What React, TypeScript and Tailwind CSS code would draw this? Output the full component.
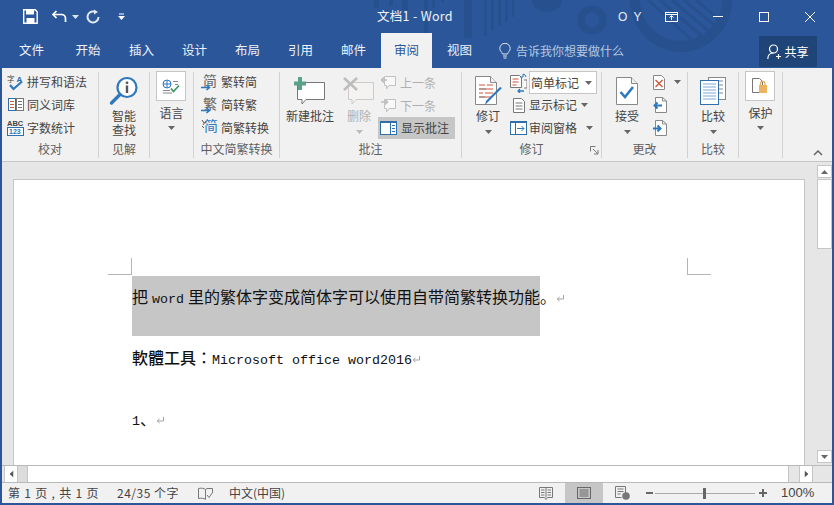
import React from "react";

const Caret = ({ c = "#666" }: { c?: string }) => (
  <svg width="7" height="4" viewBox="0 0 7 4" className="shrink-0"><path d="M0 0h7L3.5 4z" fill={c} /></svg>
);

const Pilcrow = () => (
  <svg width="9" height="9" viewBox="0 0 9 9" className="shrink-0"><path d="M7.5 1v4H1.5M3.5 3 1.2 5l2.3 2" fill="none" stroke="#9a9a9a" strokeWidth="0.9" /></svg>
);

const TitlePattern = () => (
  <svg width="834" height="68" viewBox="0 0 834 68" className="absolute left-0 top-0 pointer-events-none">
    <g fill="#27508f">
      <rect x="374" y="0" width="5" height="8" />
      <rect x="389" y="0" width="4" height="6" />
      <rect x="402" y="0" width="6" height="10" />
      <rect x="424" y="0" width="4" height="34" />
      <rect x="432" y="0" width="3" height="8" />
      <rect x="441" y="0" width="3" height="2" />
      <rect x="464" y="0" width="8" height="38" />
      <rect x="484" y="0" width="3" height="36" />
      <rect x="491" y="0" width="3" height="30" />
      <rect x="498" y="0" width="3" height="26" />
      <rect x="505" y="0" width="3" height="22" />
      <rect x="512" y="0" width="2" height="17" />
      <path d="M532 0h30a15 12 0 0 1-30 0z" />
    </g>
    <circle cx="592" cy="20" r="11" fill="none" stroke="#27508f" strokeWidth="7" />
    <path d="M630 0a51 52 0 0 0 102 0h-10a41 41 0 0 1-82 0z" fill="#27508f" />
    <g stroke="#27508f" strokeWidth="3">
      <path d="M648 0 694 42M660 0 704 38M672 0 712 34M684 0 718 28M696 0 722 22" />
    </g>
  </svg>
);

const Tab = ({ w, label, active }: { w: string; label: string; active?: boolean }) => (
  <div className={`${w} h-full flex items-center justify-center text-[12.5px] ${active ? "bg-[#f1f1f1] text-[#2b579a]" : "text-[#eef2f8]"}`}>{label}</div>
);

const Group = ({ w, label, children, launcher }: { w: string; label: string; children: React.ReactNode; launcher?: boolean }) => (
  <div className={`${w} relative h-[86px] my-[4px] shrink-0 flex flex-col border-r border-[#d2d2d2]`}>
    <div className="flex h-[68px] -mt-[1px]">{children}</div>
    <div className="h-[19px] flex items-center justify-center text-[12px] text-[#5f5f5f]">{label}</div>
    {launcher && (
      <svg width="9" height="9" viewBox="0 0 9 9" className="absolute right-[2px] bottom-[3px]">
        <path d="M0.5 0.5h5M0.5 0.5v5" stroke="#777" fill="none" />
        <path d="M3 3 7.5 7.5M8 4v4H4" stroke="#777" fill="none" />
      </svg>
    )}
  </div>
);

const Row = ({ icon, label, dim, gap = "gap-[3px]", extra }: { icon: React.ReactNode; label: string; dim?: boolean; gap?: string; extra?: React.ReactNode }) => (
  <div className={`h-[23px] flex items-center ${gap} text-[12px] whitespace-nowrap ${dim ? "text-[#b0b0b0]" : "text-[#444]"}`}>
    <span className="w-[17px] h-[17px] flex items-center justify-center shrink-0">{icon}</span>
    <span>{label}</span>
    {extra}
  </div>
);

const BigBtn = ({ w, icon, lines, caret, dim }: { w: string; icon: React.ReactNode; lines: string[]; caret?: boolean; dim?: boolean }) => (
  <div className={`${w} flex flex-col items-center shrink-0 text-[12px] leading-[14px] ${dim ? "text-[#b0b0b0]" : "text-[#444]"}`}>
    <div className="h-[37px] flex items-center justify-center mt-[1px]">{icon}</div>
    {lines.map((l) => <div key={l}>{l}</div>)}
    {caret && <div className="mt-[7px] flex"><Caret c={dim ? "#bbb" : "#666"} /></div>}
  </div>
);

const BoxBtn = ({ w, icon, label }: { w: string; icon: React.ReactNode; label: string }) => (
  <div className={`${w} flex flex-col items-center shrink-0 text-[12px] leading-[14px] text-[#444]`}>
    <div className="w-[30px] h-[30px] -translate-x-[1px] bg-white border border-[#c6c6c6] flex items-center justify-center">{icon}</div>
    <div className="mt-[5px]">{label}</div>
    <div className="mt-[6px] flex"><Caret /></div>
  </div>
);

const IconSpell = () => (
  <svg width="17" height="17" viewBox="0 0 17 17">
    <text x="0" y="7.5" fontSize="7.5" fill="#444" fontFamily="Noto Sans CJK SC">字</text>
    <text x="9.5" y="7.5" fontSize="8" fill="#2b6cb0" fontWeight="700" fontFamily="Liberation Sans">A</text>
    <path d="M3 11 6.5 15 15 7.5" stroke="#2f78bd" strokeWidth="2.2" fill="none" />
  </svg>
);
const IconThes = () => (
  <svg width="16" height="14" viewBox="0 0 16 14">
    <rect x="0.5" y="0.5" width="7" height="12" fill="#fff" stroke="#2f6fb0" />
    <rect x="8.5" y="0.5" width="7" height="12" fill="#fff" stroke="#777" />
    <path d="M2 3.5h4M2 6.5h4M2 9.5h4" stroke="#d2553b" />
    <path d="M10 3.5h4M10 6.5h4M10 9.5h4" stroke="#777" />
  </svg>
);
const IconCount = () => (
  <svg width="17" height="17" viewBox="0 0 17 17">
    <text x="0" y="7" fontSize="7.5" fill="#444" fontFamily="Liberation Sans" fontWeight="700">ABC</text>
    <rect x="0.5" y="8.5" width="16" height="8" fill="#fff" stroke="#2f6fb0" />
    <text x="2" y="15" fontSize="7" fill="#2f6fb0" fontFamily="Liberation Sans" fontWeight="700">123</text>
  </svg>
);
const IconSearch = () => (
  <svg width="30" height="30" viewBox="0 0 30 30">
    <circle cx="18" cy="11.5" r="9.5" fill="#fff" stroke="#2f78bd" strokeWidth="2.2" />
    <path d="M11 18.5 2.5 27" stroke="#2f78bd" strokeWidth="3.4" strokeLinecap="round" />
    <circle cx="18" cy="6.8" r="1.4" fill="#555" />
    <rect x="16.8" y="9.5" width="2.4" height="7.5" fill="#555" />
  </svg>
);
const IconLang = () => (
  <svg width="18" height="15" viewBox="0 0 18 15">
    <circle cx="5" cy="5" r="4" fill="none" stroke="#2f78bd" />
    <path d="M1 5h8M5 1v8" stroke="#2f78bd" />
    <path d="M1 11.500h7M1 14h9M11 2.500h5M13 5.500h3" stroke="#888" />
    <path d="M9 9.500 11.500 12.500 17 6.500" stroke="#3a9a62" strokeWidth="1.800" fill="none" />
  </svg>
);
const IconConv = ({ ch, arrow, left }: { ch: string; arrow?: boolean; left?: boolean }) => (
  <svg width="17" height="17" viewBox="0 0 17 17" className="overflow-visible">
    <text x={left ? 3 : 2} y="12" fontSize="14" fill={left ? "#2f78bd" : "#666"} fontFamily="Noto Sans CJK SC">{ch}</text>
    {left && <path d="M1 1 3 4M5 2 2 6M1 7l2 2" stroke="#555" />}
    {arrow && <path d="M0 13.5h8M5.500 11l3 2.500-3 2.500" stroke="#2f78bd" strokeWidth="1.600" fill="none" />}
  </svg>
);
const IconNewComment = () => (
  <svg width="32" height="28" viewBox="0 0 32 28">
    <path d="M3.5 5.5h27v17H12L8 27v-4.5H3.5z" fill="#fff" stroke="#777" />
    <path d="M6 0v13M0 6.5h12" stroke="#5aa18a" strokeWidth="4" />
  </svg>
);
const IconDelComment = () => (
  <svg width="32" height="28" viewBox="0 0 32 28">
    <path d="M5.5 5.5h25v17H13L9 27v-4.5H5.5z" fill="#f5f2f2" stroke="#cfcaca" />
    <path d="M1 1 14 13M14 1 1 13" stroke="#bdbdbd" strokeWidth="2.6" />
  </svg>
);
const IconNav = ({ dir }: { dir: "l" | "r" }) => (
  <svg width="16" height="15" viewBox="0 0 16 15">
    <path d="M3.5 1.5h11v9H8L5.5 14v-3.500h-2z" fill="#f8f8f8" stroke="#c4c0c0" />
    <path d={dir === "l" ? "M0 5h6M3 2.500 0.500 5 3 7.500" : "M0 4h6M4 1.500 6.500 4 4 6.500"} stroke="#bdbdbd" strokeWidth="1.600" fill="none" />
  </svg>
);
const IconShowC = () => (
  <svg width="17" height="14" viewBox="0 0 17 14">
    <rect x="0" y="0" width="17" height="14" fill="#2f6fa8" />
    <rect x="1" y="2" width="9" height="11" fill="#fff" />
    <rect x="11" y="2" width="5" height="11" fill="#fff" />
    <path d="M12 4.500h3M12 7.500h3M12 10.500h3" stroke="#2f78bd" />
  </svg>
);
const IconTrack = () => (
  <svg width="30" height="30" viewBox="-2 0 30 30">
    <path d="M0.5 0.5h15l6 6v22H0.5z" fill="#fff" stroke="#888" />
    <path d="M15.500 0.500v6h6" fill="#f0f0f0" stroke="#888" />
    <path d="M4 9h6M12 9h6M4 13h14M4 17h4M10 17h8M4 21h12" stroke="#d2553b" />
    <path d="M4 13h7M4 21h6" stroke="#888" />
    <path d="M27 12 13 26l-3 3 1-4 14-14z" fill="#2f78bd" />
  </svg>
);
const IconMarkup = () => (
  <svg width="17" height="20" viewBox="0 0 17 20">
    <path d="M0.500 2.500h9l2 2v10h-11z" fill="#fff" stroke="#777" />
    <path d="M2.500 6h6M2.500 9h6M2.500 12h4" stroke="#d2553b" />
    <path d="M13 1v3h-3M16 4a3.500 3.500 0 0 0-3-3" stroke="#2f78bd" fill="none" />
    <path d="M8 18h6M10 16l-2 2 2 2" stroke="#2f78bd" fill="none" strokeWidth="1.300" />
    <path d="M14 7h3v8h-3" stroke="#777" fill="#fff" />
  </svg>
);
const IconDoc = () => (
  <svg width="12" height="15" viewBox="0 0 12 15">
    <path d="M0.500 0.500h8l3 3v11h-11z" fill="#fff" stroke="#777" />
    <path d="M2.500 5h7M2.500 8h7M2.500 11h7" stroke="#777" />
  </svg>
);
const IconPane = () => (
  <svg width="17" height="14" viewBox="0 0 17 14">
    <rect width="17" height="14" fill="#2f6fa8" />
    <rect x="1" y="2" width="4" height="11" fill="#fff" />
    <rect x="6" y="2" width="10" height="11" fill="#fff" />
    <path d="M7 7.500h7M11.500 5l2.500 2.500-2.500 2.500" stroke="#2f78bd" fill="none" />
  </svg>
);
const IconAccept = () => (
  <svg width="22" height="28" viewBox="0 0 22 28">
    <path d="M0.500 0.500h15l6 6v21h-21z" fill="#fff" stroke="#888" />
    <path d="M15.500 0.500v6h6" fill="#f0f0f0" stroke="#888" />
    <path d="M4.500 15 9 20 17 10" stroke="#2f78bd" strokeWidth="2.600" fill="none" />
  </svg>
);
const IconReject = () => (
  <svg width="12" height="15" viewBox="0 0 12 15">
    <path d="M0.500 0.500h8l3 3v11h-11z" fill="#fff" stroke="#888" />
    <path d="M2.500 5 9.500 12M9.500 5 2.500 12" stroke="#d2553b" strokeWidth="1.400" />
  </svg>
);
const IconPrevNext = ({ dir }: { dir: "l" | "r" }) => (
  <svg width="14" height="16" viewBox="0 0 14 16">
    <path d="M2.500 0.500h7l4 3.500v11.500h-11z" fill="#fff" stroke="#888" />
    <path d="M9.500 0.500V4h4" fill="none" stroke="#888" />
    <path d={dir === "l" ? "M9 8.500H1.500M4.500 5.500l-3 3 3 3" : "M0 8.500h7.500M4.500 5.500l3 3-3 3"} stroke="#2f78bd" strokeWidth="2" fill="none" />
  </svg>
);
const IconCompare = () => (
  <svg width="26" height="28" viewBox="0 0 26 28">
    <rect x="8.500" y="0.500" width="17" height="22" fill="#fff" stroke="#888" />
    <path d="M19 4h4M19 8h4M19 12h4M19 16h4" stroke="#888" />
    <rect x="0.500" y="3.500" width="18" height="24" fill="#fff" stroke="#2f6fb0" />
    <path d="M3 7h13M3 10h13M3 13h13M3 16h13M3 19h13M3 22h13" stroke="#7fa9d6" />
  </svg>
);
const IconProtect = () => (
  <svg width="15" height="16" viewBox="0 0 15 16">
    <path d="M0.500 0.500h7l3 3v11h-10z" fill="#fff" stroke="#777" />
    <path d="M8.500 7V5.500a2.200 2.200 0 0 1 4.400 0V7" fill="none" stroke="#e0ad5e" strokeWidth="1.200" />
    <rect x="7" y="7" width="8" height="8" fill="#ecb45f" />
  </svg>
);

const Panel = ({ children, w }: { children: React.ReactNode; w: string }) => (
  <div className={`${w} shrink-0 flex flex-col`}>{children}</div>
);

export default function App() {
  return (
    <div className="w-[834px] h-[505px] relative overflow-hidden flex flex-col bg-[#2b579a] px-[2px] pb-[2px] font-['Noto_Sans_CJK_SC','Liberation_Sans',sans-serif]">
      <TitlePattern />

      {/* Title bar */}
      <div className="relative h-[33px] flex items-center text-white shrink-0">
        <div className="w-[21px]" />
        <svg width="15" height="15" viewBox="0 0 15 15"><path d="M0.700 0.700h11.500l2 2v11.600H.7z" fill="none" stroke="#fff" strokeWidth="1.400" /><rect x="3" y="1" width="8" height="4.500" fill="#fff" /><rect x="3.500" y="9" width="8" height="5" fill="#fff" /></svg>
        <div className="w-[14px]" />
        <svg width="15" height="13" viewBox="0 0 15 13"><path d="M4.500 1 1 4.500 4.500 8M1.500 4.500h8a4 4 0 0 1 4 4V12" fill="none" stroke="#fff" strokeWidth="1.700" /></svg>
        <div className="w-[5px]" />
        <Caret c="#dbe4f1" />
        <div className="w-[7px]" />
        <svg width="14" height="15" viewBox="0 0 14 15"><path d="M8 2.500A5.500 5.500 0 1 0 12.500 8" fill="none" stroke="#e4eaf4" strokeWidth="2" /><path d="M8 .5v5l4-2.500z" fill="#e4eaf4" /></svg>
        <div className="w-[18px]" />
        <svg width="7" height="7" viewBox="0 0 7 7"><path d="M1 1h5" stroke="#fff" /><path d="M0 3h7L3.500 7z" fill="#fff" /></svg>
        <div className="ml-[252px] text-[12.5px] tracking-[0.3px] text-[#f0f3f9] w-[241px] whitespace-nowrap">文档1 - Word</div>
        <div className="text-[12px] tracking-[1.5px] text-[#e8edf5] font-['Liberation_Sans',sans-serif] w-[47px] whitespace-nowrap">O Y</div>
        <svg width="13" height="10" viewBox="0 0 13 10"><rect x=".5" y=".5" width="12" height="9" fill="none" stroke="#fff" /><path d="M.5 2.500h12" stroke="#fff" /><path d="M6.500 8V4M4.500 5.500l2-2 2 2" fill="none" stroke="#fff" /></svg>
        <div className="w-[35px]" />
        <div className="w-[10px] h-[1px] bg-white" />
        <div className="w-[36px]" />
        <div className="w-[10px] h-[10px] border border-white" />
        <div className="w-[36px]" />
        <svg width="10" height="10" viewBox="0 0 10 10"><path d="M0 0 10 10M10 0 0 10" stroke="#fff" /></svg>
      </div>

      {/* Tabs */}
      <div className="relative h-[35px] flex shrink-0 items-stretch">
        <Tab w="w-[59px]" label="文件" />
        <Tab w="w-[54px]" label="开始" />
        <Tab w="w-[53px]" label="插入" />
        <Tab w="w-[53px]" label="设计" />
        <Tab w="w-[53px]" label="布局" />
        <Tab w="w-[53px]" label="引用" />
        <Tab w="w-[53px]" label="邮件" />
        <div className="w-[1px]" />
        <Tab w="w-[51px]" label="审阅" active />
        <Tab w="w-[55px]" label="视图" />
        <div className="flex items-center gap-[5px] ml-[12px] text-[12px] text-[#b7c7e0] whitespace-nowrap">
          <svg width="12" height="16" viewBox="0 0 12 16"><path d="M3.500 11C3 9 .8 8 .8 5.500a5.200 5.200 0 0 1 10.400 0C11.200 8 9 9 8.500 11z" fill="none" stroke="#dfe6f1" /><path d="M4 13h4M4.500 15h3" stroke="#dfe6f1" /></svg>
          告诉我你想要做什么
        </div>
        <div className="ml-auto mr-[15px] mt-[3px] mb-[1px] w-[58px] bg-[#1f4478] flex items-center justify-center gap-[2px] text-[12px] text-white">
          <svg width="15" height="16" viewBox="0 0 15 16"><circle cx="6.500" cy="5" r="4" fill="none" stroke="#fff" strokeWidth="1.200" /><path d="M.8 15c0-4 2.500-6 5.700-6M11.500 10v5M9 12.500h5" fill="none" stroke="#fff" strokeWidth="1.200" /></svg>
          共享
        </div>
      </div>

      {/* Ribbon */}
      <div className="relative h-[94px] shrink-0 bg-[#f1f1f1] flex border-b border-[#c6c6c6]">
        <Group w="w-[97px]" label="校对">
          <Panel w="w-full pl-[5px]">
            <Row icon={<IconSpell />} label="拼写和语法" />
            <Row icon={<IconThes />} label="同义词库" />
            <Row icon={<IconCount />} label="字数统计" />
          </Panel>
        </Group>
        <Group w="w-[51px]" label="见解">
          <BigBtn w="w-full" icon={<IconSearch />} lines={["智能", "查找"]} />
        </Group>
        <Group w="w-[44px]" label="">
          <BoxBtn w="w-full" icon={<IconLang />} label="语言" />
        </Group>
        <Group w="w-[86px]" label="中文简繁转换">
          <Panel w="w-full pl-[7px]">
            <Row icon={<IconConv ch="简" arrow />} label="繁转简" />
            <Row icon={<IconConv ch="繁" arrow />} label="简转繁" />
            <Row icon={<IconConv ch="简" left />} label="简繁转换" />
          </Panel>
        </Group>
        <Group w="w-[182px]" label="批注">
          <BigBtn w="w-[60px]" icon={<IconNewComment />} lines={["新建批注"]} />
          <BigBtn w="w-[38px]" icon={<IconDelComment />} lines={["删除"]} caret dim />
          <Panel w="w-[77px]">
            <div className="pl-[2px]"><Row dim icon={<IconNav dir="l" />} label="上一条" gap="gap-[3px]" /></div>
            <div className="pl-[2px]"><Row dim icon={<IconNav dir="r" />} label="下一条" gap="gap-[3px]" /></div>
            <div className="h-[23px] bg-[#c6c6c6] flex items-center gap-[4px] pl-[2px] text-[12px] text-[#444] whitespace-nowrap"><IconShowC />显示批注</div>
          </Panel>
        </Group>
        <Group w="w-[140px]" label="修订" launcher>
          <BigBtn w="w-[52px]" icon={<IconTrack />} lines={["修订"]} caret />
          <Panel w="w-[88px] -ml-[4px]">
            <div className="h-[23px] flex items-center gap-[2px]">
              <span className="w-[17px] flex justify-center"><IconMarkup /></span>
              <div className="w-[68px] h-[23px] bg-white border border-[#c6c6c6] flex items-center justify-between pl-[1px] pr-[4px] text-[12px] text-[#444] whitespace-nowrap">简单标记<Caret /></div>
            </div>
            <Row gap="gap-[2px]" icon={<IconDoc />} label="显示标记" extra={<span className="ml-[2px]"><Caret /></span>} />
            <Row gap="gap-[2px]" icon={<IconPane />} label="审阅窗格" extra={<span className="ml-[7px]"><Caret /></span>} />
          </Panel>
        </Group>
        <Group w="w-[86px]" label="更改">
          <BigBtn w="w-[50px]" icon={<IconAccept />} lines={["接受"]} caret />
          <Panel w="w-[34px]">
            <div className="h-[23px] flex items-center gap-[9px] pl-[1px]"><IconReject /><Caret /></div>
            <div className="h-[23px] flex items-center pl-[1px]"><IconPrevNext dir="l" /></div>
            <div className="h-[23px] flex items-center pl-[1px]"><IconPrevNext dir="r" /></div>
          </Panel>
        </Group>
        <Group w="w-[51px]" label="比较">
          <BigBtn w="w-full" icon={<IconCompare />} lines={["比较"]} caret />
        </Group>
        <Group w="w-[44px]" label="">
          <BoxBtn w="w-full" icon={<IconProtect />} label="保护" />
        </Group>
        <svg width="10" height="6" viewBox="0 0 10 6" className="absolute right-[9px] bottom-[5px]"><path d="M1 5 5 1l4 4" fill="none" stroke="#666" strokeWidth="1.500" /></svg>
      </div>

      {/* Document area */}
      <div className="flex-1 min-h-0 flex flex-col bg-[#e6e6e6]">
        <div className="flex-1 min-h-0 flex">
          <div className="flex-1 min-w-0 pl-[11px] pr-[12px] pt-[17px] overflow-hidden">
            <div className="relative h-[400px] bg-white border border-[#c6c6c6] pl-[118px] pt-[96px] text-[16px] text-[#111] leading-[40px]">
              <div className="absolute left-[94px] top-[78px] w-[24px] h-[17px] border-r border-b border-[#b5b5b5]" />
              <div className="absolute left-[673px] top-[78px] w-[24px] h-[17px] border-l border-b border-[#b5b5b5]" />
              <div className="h-[61px] flex items-start whitespace-nowrap">
                <div className="w-[408px] h-[60px] bg-[#c6c6c6]">把<span className="font-['Liberation_Mono',monospace] text-[13.33px] mx-[4px]">word</span>里的繁体字变成简体字可以使用自带简繁转换功能</div>
                <span>。</span>
                <span className="mt-[18px]"><Pilcrow /></span>
              </div>
              <div className="h-[61px] flex items-baseline whitespace-nowrap">
                <span className="font-medium">軟體工具</span><span className="font-['Noto_Sans_CJK_TC',sans-serif]">：</span>
                <span className="font-['Liberation_Mono',monospace] text-[13.33px]">Microsoft office word2016</span>
                <span className="self-start mt-[18px]"><Pilcrow /></span>
              </div>
              <div className="h-[61px] flex items-baseline whitespace-nowrap">
                <span className="font-['Liberation_Mono',monospace] text-[13.33px]">1</span><span>、</span>
                <span className="self-start mt-[18px]"><Pilcrow /></span>
              </div>
            </div>
          </div>
          <div className="w-[15px] flex flex-col pt-[3px] pb-[2px] shrink-0">
            <div className="h-[13px] bg-white border border-[#c6c6c6] flex items-center justify-center"><span className="rotate-180 flex"><Caret /></span></div>
            <div className="h-[70px] mt-[1px] bg-white border border-[#c6c6c6]" />
            <div className="flex-1" />
            <div className="h-[13px] bg-white border border-[#c6c6c6] flex items-center justify-center"><Caret /></div>
          </div>
        </div>
        <div className="h-[18px] shrink-0 bg-[#e6e6e6] border-y border-[#b9b9b9] flex items-stretch pl-[2px]">
          <div className="w-[14px] bg-white border-x border-[#c6c6c6] flex items-center justify-center"><span className="rotate-90 flex"><Caret c="#555" /></span></div>
          <div className="w-[9px] bg-[#dcdcdc]" />
          <div className="w-[762px] bg-white border-x border-[#c6c6c6]" />
          <div className="w-[10px]" />
          <div className="w-[14px] bg-white border-x border-[#c6c6c6] flex items-center justify-center"><span className="-rotate-90 flex"><Caret c="#555" /></span></div>
        </div>
      </div>

      {/* Status bar */}
      <div className="h-[20px] shrink-0 bg-[#f1f1f1] flex items-center text-[12px] text-[#444] whitespace-nowrap">
        <span className="ml-[6px] w-[109px] tracking-[0.8px]">第 1 页 , 共 1 页</span>
        <span className="w-[81px] tracking-[0.5px]">24/35 个字</span>
        <svg width="15" height="13" viewBox="0 0 15 13"><path d="M7.500 2.500C6 1 3 1 .5 1.500v10c2.500-.5 5.500-.5 7 1zM7.500 2.500 9 1.500h5.500V6" fill="none" stroke="#777" /><path d="M9 8l2 2.500 3.500-5" fill="none" stroke="#777" /></svg>
        <span className="ml-[16px]">中文(中国)</span>
        <div className="ml-auto mr-[14px] flex items-center h-full">
          <svg width="14" height="13" viewBox="0 0 14 13"><path d="M.5.500h13v10h-5L7 12.500 5.500 10.500h-5zM7 .5v10M2 3h3.500M2 5.500h3.500M2 8h3.500M8.500 3H12M8.500 5.500H12M8.500 8H12" fill="none" stroke="#777" /></svg>
          <div className="w-[12px]" />
          <div className="w-[38px] h-full bg-[#c6c6c6] flex items-center justify-center">
            <svg width="14" height="12" viewBox="0 0 14 12"><rect x=".5" y=".5" width="13" height="11" fill="none" stroke="#666" /><path d="M2.500 3h9M2.500 5h9M2.500 7h9M2.500 9h9" stroke="#666" /></svg>
          </div>
          <div className="w-[12px]" />
          <svg width="15" height="14" viewBox="0 0 15 14"><path d="M.5.500h10v7M.5.500v11h6M2.500 3h6M2.500 5.500h6M2.500 8h3" fill="none" stroke="#777" /><circle cx="11" cy="10" r="3.800" fill="#777" /></svg>
          <div className="w-[16px]" />
          <div className="w-[7px] h-[2px] bg-[#666]" />
          <div className="w-[2px]" />
          <div className="relative w-[100px] h-[1px] bg-[#aaa]">
            <div className="absolute left-[48px] -top-[5px] w-[3px] h-[11px] bg-[#666]" />
          </div>
          <div className="w-[4px]" />
          <div className="relative w-[8px] h-[8px] flex items-center justify-center"><div className="w-[8px] h-[2px] bg-[#666]" /><div className="absolute w-[2px] h-[8px] bg-[#666]" /></div>
          <div className="w-[14px]" />
          <span className="w-[37px] font-['Liberation_Sans',sans-serif] text-[13px]">100%</span>
        </div>
      </div>
    </div>
  );
}
